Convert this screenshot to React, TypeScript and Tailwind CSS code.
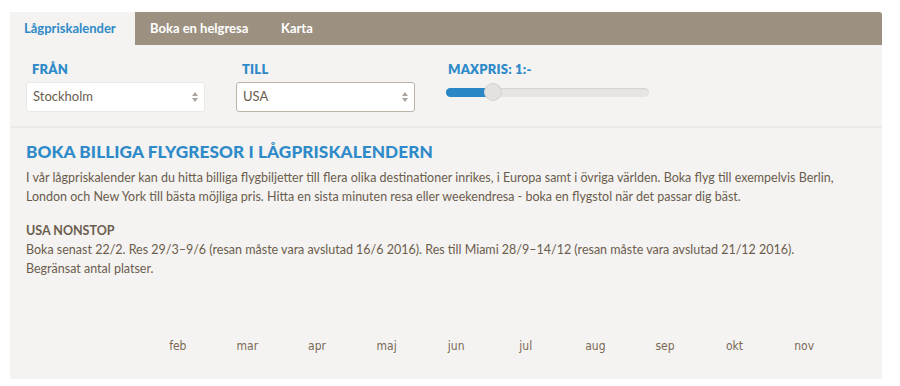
import React, { useState } from 'react';

const months = ['feb', 'mar', 'apr', 'maj', 'jun', 'jul', 'aug', 'sep', 'okt', 'nov'];

const SelectArrows: React.FC = () => (
  <svg width="6" height="10" viewBox="0 0 6 10" className="shrink-0">
    <path d="M3 0 L6 4 L0 4 Z" fill="#a9a39b" />
    <path d="M3 10 L6 6 L0 6 Z" fill="#a9a39b" />
  </svg>
);

interface FieldProps {
  label: string;
  value: string;
  focused?: boolean;
}

const SelectField: React.FC<FieldProps> = ({ label, value, focused }) => (
  <div className="flex flex-col">
    <span className="pl-[6px] text-[13px] font-extrabold leading-4 tracking-[0.2px] text-[#2e8ac8]">{label}</span>
    <div
      className={`mt-[5px] flex h-[30px] w-[179px] items-center justify-between rounded-[3px] border bg-white pl-[6px] pr-[6px] text-[13px] text-[#6b5d4e] ${
        focused ? 'border-[#bcb4a9]' : 'border-[#ebe8e4]'
      }`}
    >
      <span>{value}</span>
      <SelectArrows />
    </div>
  </div>
);

export default function App() {
  const [tab, setTab] = useState(0);
  const tabs = ['Lågpriskalender', 'Boka en helgresa', 'Karta'];

  return (
    <div className="min-h-[386px] bg-white pl-[10px] pt-[12px] font-['Lato','Open_Sans',sans-serif]">
      <div className="w-[872px] bg-[#f4f3f1]">
        {/* tabs */}
        <div className="flex h-[33px] bg-[#9c9180] rounded-tr-[3px]">
          {tabs.map((t, i) => (
            <button
              key={t}
              onClick={() => setTab(i)}
              className={`h-full text-[13px] font-bold ${
                i === 0 ? 'w-[125px] pl-[14px] text-left' : i === 1 ? 'w-[146px] pl-[15px] text-left' : 'pl-[0px] text-left'
              } ${tab === i ? 'bg-[#f4f3f1] text-[#2e8ac8]' : 'text-white'}`}
            >
              {t}
            </button>
          ))}
        </div>

        {/* search row */}
        <div className="flex h-[83px] gap-[31px] border-b-[2px] border-[#ecebe8] pl-[16px] pt-[16px]">
          <SelectField label="FRÅN" value="Stockholm" />
          <SelectField label="TILL" value="USA" focused />
          <div className="flex flex-col">
            <span className="pl-[2px] text-[13px] font-extrabold leading-4 tracking-[0.2px] text-[#2e8ac8]">MAXPRIS: 1:-</span>
            <div className="relative mt-[11px] h-[9px] w-[203px] rounded-full bg-[#e6e5e3] shadow-[inset_0_1px_1px_rgba(0,0,0,0.08)]">
              <div className="h-full w-[46px] rounded-l-full bg-[#2b86c5]" />
              <div className="absolute left-[38px] top-[-5px] h-[18px] w-[18px] rounded-full border border-[#d5d3d0] bg-[#e3e2e0]" />
            </div>
          </div>
        </div>

        {/* content */}
        <div className="px-[16px] pt-[12px] text-[12.5px] leading-[19px] text-[#6b5d4e]">
          <h1 className="text-[17.2px] font-black leading-6 tracking-[0.1px] text-[#2e8ac8]">
            BOKA BILLIGA FLYGRESOR I LÅGPRISKALENDERN
          </h1>
          <p className="mt-[4px] w-[850px]">
            I vår lågpriskalender kan du hitta billiga flygbiljetter till flera olika destinationer inrikes, i Europa samt i övriga världen. Boka flyg till exempelvis Berlin, London och New York till bästa möjliga pris. Hitta en sista minuten resa eller weekendresa - boka en flygstol när det passar dig bäst.
          </p>
          <p className="mt-[15px] font-bold">USA NONSTOP</p>
          <p className="w-[850px]">
            Boka senast 22/2. Res 29/3–9/6 (resan måste vara avslutad 16/6 2016). Res till Miami 28/9–14/12 (resan måste vara avslutad 21/12 2016).
            <br />
            Begränsat antal platser.
          </p>
        </div>

        {/* months */}
        <div className="flex pb-[25px] pl-[133px] pt-[60px] font-['DejaVu_Sans_Condensed',sans-serif] text-[12px] leading-4 text-[#7a6955]">
          {months.map((m) => (
            <span key={m} className="w-[69.6px] text-center">
              {m}
            </span>
          ))}
        </div>
      </div>
    </div>
  );
}
